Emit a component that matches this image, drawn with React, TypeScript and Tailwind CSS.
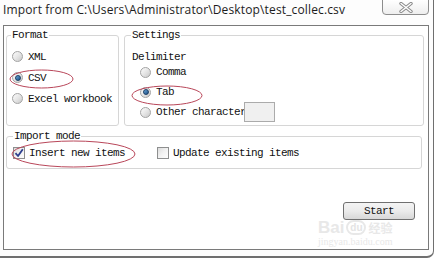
import React from "react";

const mono =
  "font-['Liberation_Mono',monospace] text-[11px] leading-[12px] tracking-[-0.6px] text-[#111] whitespace-nowrap";

function Radio({ checked = false }: { checked?: boolean }) {
  return (
    <span className="flex h-[11px] w-[11px] shrink-0 items-center justify-center rounded-full border border-[#a3a3a3] bg-linear-to-br from-[#fbfbfb] via-[#e6e6e6] to-[#c9c9c9]">
      {checked && (
        <span className="h-[6px] w-[6px] rounded-full border border-[#1b3f66] bg-linear-to-br from-[#6aa6d8] to-[#1a4f85]" />
      )}
    </span>
  );
}

function Checkbox({ checked = false }: { checked?: boolean }) {
  return (
    <span className="flex h-[12px] w-[12px] shrink-0 items-center justify-center border border-[#8e8f8f] bg-linear-to-br from-[#dcdcdc] via-[#f2f2f2] to-[#fdfdfd]">
      {checked && (
        <svg width="10" height="10" viewBox="0 0 10 10">
          <path d="M1.5 5.2 L4 8 L8.8 1.2" fill="none" stroke="#2d3f8e" strokeWidth="1.8" strokeLinejoin="round" />
        </svg>
      )}
    </span>
  );
}

function Legend({ children }: { children: React.ReactNode }) {
  return <legend className={`${mono} px-[1px]`}>{children}</legend>;
}

export default function App() {
  return (
    <div className="relative h-[259px] w-[435px] overflow-hidden bg-white">
      <div className="flex h-[258px] w-[434px] flex-col rounded-br-[7px] border-r border-b-2 border-[#6f6f6f] bg-[#fdfdfd]">
        {/* title bar */}
        <div className="flex h-[25px] items-start justify-between pl-[3px] pr-[4px]">
          <span className="pt-[2px] font-['Open_Sans',sans-serif] text-[12px] leading-[16px] tracking-[0.14px] text-[#1c1c1c] whitespace-nowrap">
            Import from C:\Users\Administrator\Desktop\test_collec.csv
          </span>
          <div className="mt-[-1px] flex h-[16px] w-[47px] items-center justify-center rounded-b-[4px] border border-[#8d8d8d] bg-linear-to-b from-[#ffffff] to-[#eeeeee]">
            <svg width="14" height="11" viewBox="0 0 14 11" className="mt-[1px]">
              <path d="M2 1.5 L12 9.5 M12 1.5 L2 9.5" stroke="#8a8a8a" strokeWidth="3.4" strokeLinecap="round" />
              <path d="M2 1.5 L12 9.5 M12 1.5 L2 9.5" stroke="#ffffff" strokeWidth="1.4" strokeLinecap="round" />
            </svg>
          </div>
        </div>

        {/* client area */}
        <div className="ml-[3px] flex h-[225px] w-[426px] flex-col border border-[#7a7a7a] bg-white pl-[2px] pt-[3px]">
          <div className="flex gap-[5px]">
            <fieldset className="h-[97px] w-[113px] rounded-[3px] border border-[#d6d6d6] px-[4px]">
              <Legend>Format</Legend>
              <div className="flex flex-col pt-[5px]">
                {[
                  { l: "XML", c: false },
                  { l: "CSV", c: true },
                  { l: "Excel workbook", c: false },
                ].map((r) => (
                  <div key={r.l} className="ml-[1px] flex h-[21px] items-center gap-[5px]">
                    <Radio checked={r.c} />
                    <span className={mono}>{r.l}</span>
                  </div>
                ))}
              </div>
            </fieldset>

            <fieldset className="h-[97px] w-[300px] rounded-[3px] border border-[#d6d6d6] px-[6px]">
              <Legend>Settings</Legend>
              <div className="flex flex-col pt-[10px]">
                <div className={`${mono} ml-[1px] h-[11px]`}>Delimiter</div>
                <div className="ml-[9px] flex h-[20px] items-center gap-[5px]">
                  <Radio />
                  <span className={mono}>Comma</span>
                </div>
                <div className="ml-[9px] flex h-[20px] items-center gap-[5px]">
                  <Radio checked />
                  <span className={mono}>Tab</span>
                </div>
                <div className="ml-[9px] flex h-[20px] items-center gap-[5px]">
                  <Radio />
                  <span className={mono}>Other character</span>
                  <span className="ml-[-7px] h-[20px] w-[31px] border border-[#ababab] bg-[#f0f0f0]" />
                </div>
              </div>
            </fieldset>
          </div>

          <fieldset className="mt-[4px] h-[39px] w-[416px] rounded-[3px] border border-[#d6d6d6] px-[6px]">
            <Legend>Import mode</Legend>
            <div className="flex items-center pt-[5px]">
              <div className="flex items-center gap-[4px]">
                <Checkbox checked />
                <span className={mono}>Insert new items</span>
              </div>
              <div className="ml-[32px] flex items-center gap-[4px]">
                <Checkbox />
                <span className={mono}>Update existing items</span>
              </div>
            </div>
          </fieldset>

          <div className="mt-[33px] flex justify-end pr-[13px]">
            <div className="flex h-[18px] w-[72px] items-center justify-center rounded-[3px] border border-[#707070] bg-linear-to-b from-[#f4f4f4] via-[#ebebeb] to-[#d8d8d8]">
              <span className={mono}>Start</span>
            </div>
          </div>
        </div>
      </div>

      {/* red annotation ellipses */}
      <svg className="pointer-events-none absolute left-0 top-0" width="435" height="259">
        <ellipse cx="41.5" cy="79" rx="31.5" ry="9" fill="none" stroke="#b9475a" strokeWidth="1" />
        <ellipse cx="167" cy="95.5" rx="35" ry="9.5" fill="none" stroke="#b9475a" strokeWidth="1" />
        <ellipse cx="73.5" cy="154" rx="61.5" ry="13" fill="none" stroke="#b9475a" strokeWidth="1" />
      </svg>

      {/* watermark */}
      <div className="pointer-events-none absolute left-[318px] top-[220px] flex flex-col items-start">
        <div className="flex items-center gap-[2px]">
          <span className="font-['Liberation_Sans',sans-serif] text-[17px] font-bold leading-[15px] text-[#e8e8e8]">Bai</span>
          <span className="flex h-[15px] w-[20px] items-center justify-center rounded-full border-2 border-[#e8e8e8] font-['Liberation_Sans',sans-serif] text-[10px] font-bold leading-[10px] text-[#e4e4e4]">
            du
          </span>
          <span className="font-['Noto_Sans_CJK_SC',sans-serif] text-[12px] font-bold leading-[15px] text-[#e8e8e8]">经验</span>
        </div>
        <span className="mt-[2px] font-['Liberation_Serif',serif] text-[10px] leading-[10px] text-[#e8e8e8]">jingyan.baidu.com</span>
      </div>
    </div>
  );
}
